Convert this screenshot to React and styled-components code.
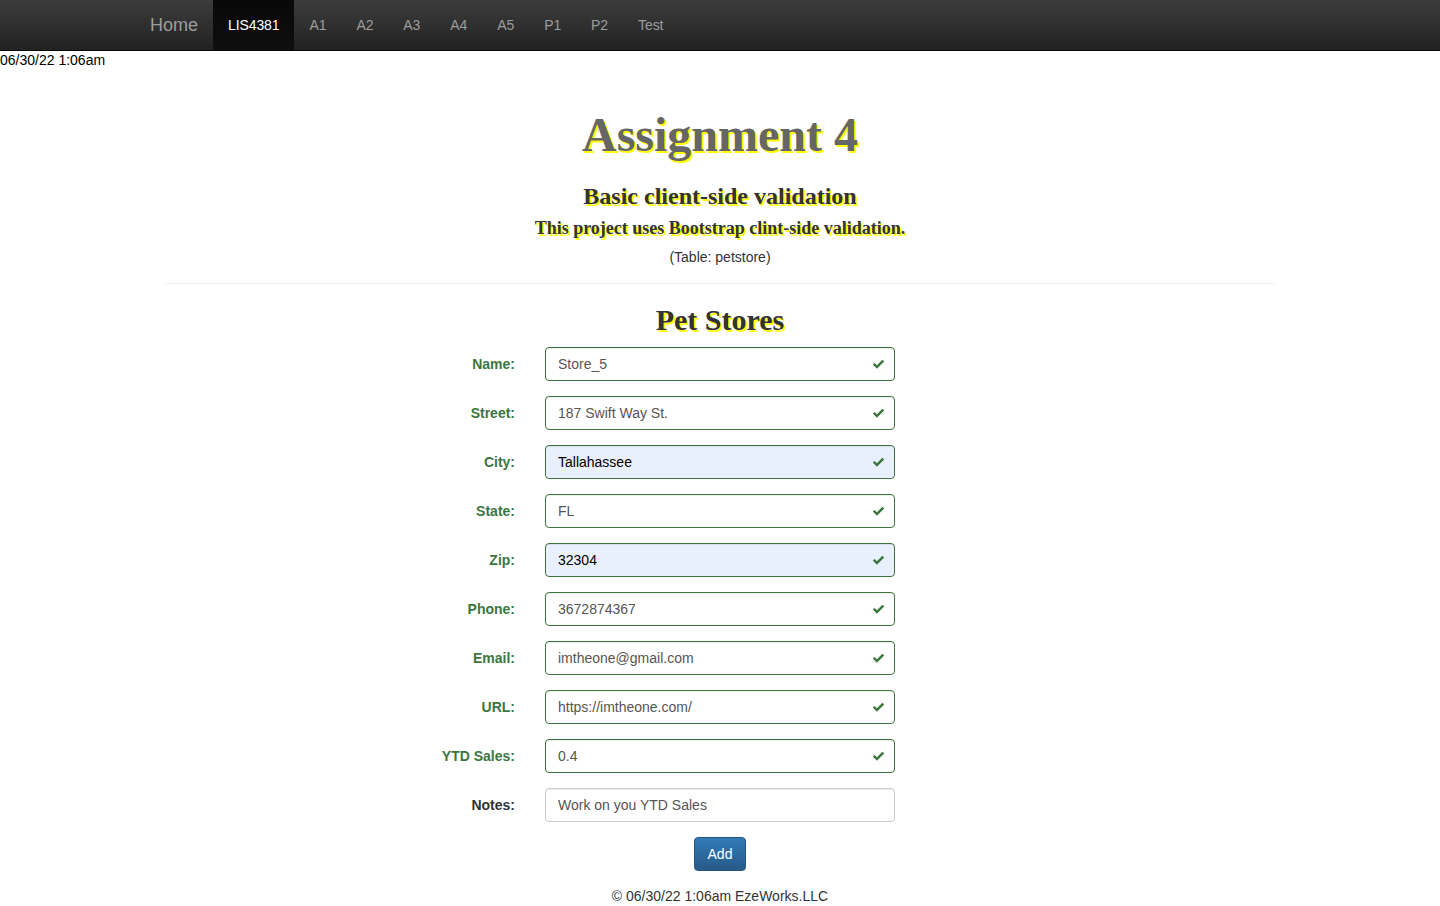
import React from 'react'
import styled, { createGlobalStyle } from 'styled-components'

const GlobalStyle = createGlobalStyle`
  html, body {
    margin: 0;
    padding: 0;
    background: #fff;
    font-family: "Liberation Sans", Arial, sans-serif;
    font-size: 14px;
    color: #333;
  }
  * { box-sizing: border-box; }
`

const NavBar = styled.nav`
  height: 51px;
  background: linear-gradient(to bottom, #3c3c3c 0%, #222 100%);
  border-bottom: 1px solid #080808;
`

const NavInner = styled.div`
  width: 1170px;
  margin: 0 auto;
  display: flex;
  height: 50px;
`

const Brand = styled.a`
  padding: 15px;
  font-size: 18px;
  line-height: 20px;
  color: #9d9d9d;
  text-decoration: none;
`

const NavLink = styled.a`
  padding: 15px;
  line-height: 20px;
  font-size: 14px;
  letter-spacing: -0.1px;
  text-decoration: none;
  color: ${p => (p.$active ? '#fff' : '#9d9d9d')};
  background: ${p => (p.$active ? 'linear-gradient(to bottom, #080808 0%, #0f0f0f 100%)' : 'transparent')};
`

const Stamp = styled.div`
  line-height: 20px;
  margin-top: -1px;
  color: #000;
`

const Header = styled.header`
  text-align: center;
`

const Title = styled.h1`
  font-family: "Liberation Serif", "Times New Roman", serif;
  font-weight: bold;
  font-size: 48px;
  line-height: 53px;
  margin: 38px 0 0;
  color: #666;
  text-shadow: 2px 2px #ff0;
`

const SubTitle = styled.h2`
  font-family: "Liberation Serif", "Times New Roman", serif;
  font-weight: bold;
  font-size: ${p => p.$size}px;
  line-height: ${p => p.$line}px;
  margin: ${p => p.$top}px 0 0;
  color: #333;
  text-shadow: 2px 2px #ff0;
`

const TableNote = styled.p`
  margin: 9px 0 0;
  line-height: 20px;
  font-size: 14px;
  color: #333;
`

const Rule = styled.hr`
  width: 1110px;
  margin: 16px auto 0;
  border: 0;
  border-top: 1px solid #eee;
`

const Form = styled.form`
  margin-top: 11px;
  display: flex;
  flex-direction: column;
  gap: 15px;
`

const Row = styled.div`
  display: grid;
  grid-template-columns: 1fr 350px 1fr;
  column-gap: 30px;
  align-items: center;
`

const Label = styled.label`
  text-align: right;
  font-weight: bold;
  font-size: 14px;
  color: ${p => (p.$valid ? '#3c763d' : '#333')};
`

const Field = styled.div`
  position: relative;
`

const Input = styled.input`
  display: block;
  width: 350px;
  height: 34px;
  padding: 6px 12px;
  font-family: "Liberation Sans", Arial, sans-serif;
  font-size: 14px;
  color: ${p => (p.$filled ? '#000' : '#555')};
  background: ${p => (p.$filled ? '#e8f0fe' : '#fff')};
  border: 1px solid ${p => (p.$valid ? '#3c763d' : '#ccc')};
  border-radius: 4px;
  box-shadow: inset 0 1px 1px rgba(0, 0, 0, 0.075);
  outline: none;
`

const Feedback = styled.span`
  position: absolute;
  top: 0;
  right: 0;
  width: 34px;
  height: 34px;
  display: flex;
  align-items: center;
  justify-content: center;
`

const ButtonRow = styled.div`
  display: flex;
  justify-content: center;
`

const Button = styled.button`
  height: 34px;
  padding: 6px 13px;
  font-family: "Liberation Sans", Arial, sans-serif;
  font-size: 14px;
  color: #fff;
  background: linear-gradient(to bottom, #337ab7 0%, #265a88 100%);
  border: 1px solid #245580;
  border-radius: 4px;
`

const Footer = styled.footer`
  margin-top: 15px;
  text-align: center;
  line-height: 20px;
  color: #333;
`

const Check = () => (
  <svg width="13" height="11" viewBox="0 0 13 11">
    <path d="M0.8 5.6 L2.6 3.9 L4.9 6.2 L10.4 0.7 L12.2 2.5 L4.9 9.8 Z" fill="#3c763d" />
  </svg>
)

const fields = [
  { label: 'Name:', value: 'Store_5' },
  { label: 'Street:', value: '187 Swift Way St.' },
  { label: 'City:', value: 'Tallahassee', filled: true },
  { label: 'State:', value: 'FL' },
  { label: 'Zip:', value: '32304', filled: true },
  { label: 'Phone:', value: '3672874367' },
  { label: 'Email:', value: 'imtheone@gmail.com' },
  { label: 'URL:', value: 'https://imtheone.com/' },
  { label: 'YTD Sales:', value: '0.4' },
  { label: 'Notes:', value: 'Work on you YTD Sales', plain: true },
]

const links = ['A1', 'A2', 'A3', 'A4', 'A5', 'P1', 'P2', 'Test']

const App = () => {
  return (
    <>
      <GlobalStyle />
      <NavBar>
        <NavInner>
          <Brand href="#">Home</Brand>
          <NavLink href="#" $active>LIS4381</NavLink>
          {links.map(l => (
            <NavLink href="#" key={l}>{l}</NavLink>
          ))}
        </NavInner>
      </NavBar>
      <Stamp>06/30/22 1:06am</Stamp>

      <Header>
        <Title>Assignment 4</Title>
        <SubTitle $size={24} $line={26} $top={22}>Basic client-side validation</SubTitle>
        <SubTitle as="h3" $size={18} $line={20} $top={9}>This project uses Bootstrap clint-side validation.</SubTitle>
        <TableNote>(Table: petstore)</TableNote>
      </Header>
      <Rule />

      <Header>
        <SubTitle $size={30} $line={33} $top={19}>Pet Stores</SubTitle>
      </Header>

      <Form onSubmit={e => e.preventDefault()}>
        {fields.map(f => (
          <Row key={f.label}>
            <Label $valid={!f.plain}>{f.label}</Label>
            <Field>
              <Input defaultValue={f.value} $valid={!f.plain} $filled={f.filled} />
              {!f.plain && (
                <Feedback>
                  <Check />
                </Feedback>
              )}
            </Field>
          </Row>
        ))}
        <ButtonRow>
          <Button type="submit">Add</Button>
        </ButtonRow>
      </Form>

      <Footer>© 06/30/22 1:06am EzeWorks.LLC</Footer>
    </>
  )
}

export default App
